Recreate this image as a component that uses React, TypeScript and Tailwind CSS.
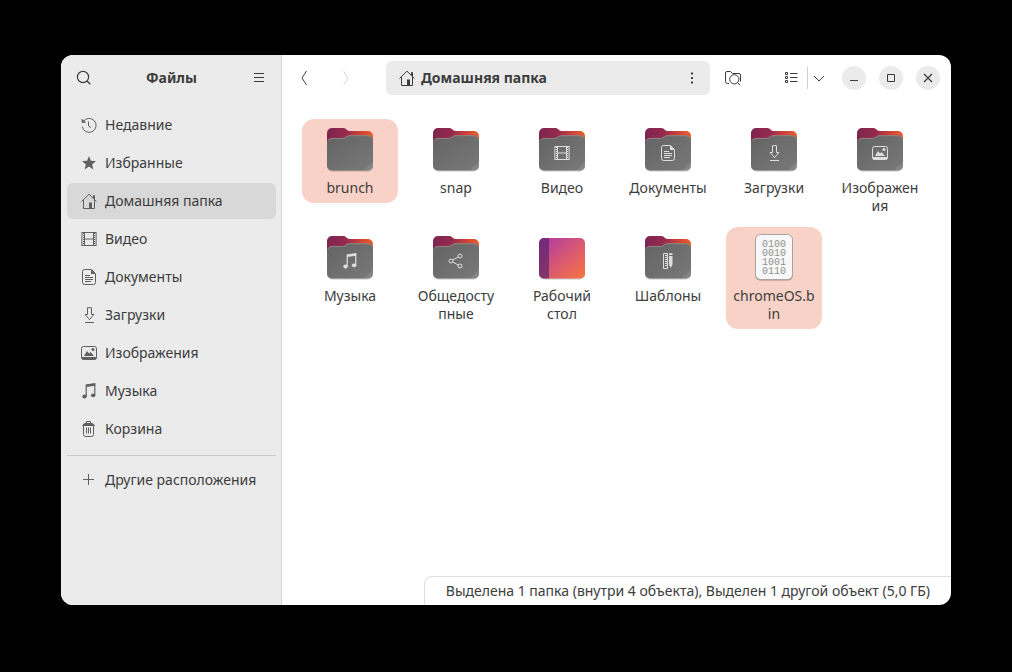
import type { ReactNode } from "react";
import clsx from "clsx";

type GlyphName =
  | "recent"
  | "star"
  | "home"
  | "video"
  | "document"
  | "download"
  | "picture"
  | "music"
  | "trash"
  | "plus"
  | "share"
  | "template";

const glyphs: Record<GlyphName, ReactNode> = {
  recent: (
    <>
      <path d="M2.2 4.6A7 7 0 1 1 1.2 9.6" />
      <path d="M.8 2.2l.4 3.6 3.6-.6z" fill="currentColor" strokeWidth=".6" />
      <path d="M7.5 4.5V9L10 10.5" />
    </>
  ),
  star: (
    <path
      d="M8 1l1.9 4.7 5.1.4-3.9 3.3 1.3 5L8 11.6l-4.4 2.8 1.3-5L1 6.1l5.1-.4z"
      fill="currentColor"
      stroke="none"
    />
  ),
  home: (
    <>
      <path d="M.5 8.6L8 1.2l7.5 7.4M12.5 5.5v-3h1v4M2.5 7v8.5H8M13.5 7v8.5H11" />
      <path d="M8 9.5h3V16H8z" fill="currentColor" stroke="none" />
    </>
  ),
  video: (
    <>
      <path d="M3.5 1.5h9v13h-9zM3.5 8h9M1 1.5h3M1 14.5h3M12 1.5h3M12 14.5h3" />
      <path d="M.9 1v14M15.1 1v14" />
      <path d="M2.5 2v12M13.5 2v12" strokeDasharray="1 1" />
    </>
  ),
  document: (
    <>
      <path d="M3.5.5h7l4 4v9a2 2 0 0 1-2 2h-9a2 2 0 0 1-2-2v-11a2 2 0 0 1 2-2z" />
      <path d="M10 .5V5h4.5z" fill="currentColor" stroke="none" />
      <path d="M4 6.5h5M4 8.5h8M4 10.5h8M4 12.5h6" />
    </>
  ),
  download: <path d="M6.5.7h4v6.8h2.4L8.5 12.6 4.1 7.500h2.4zM4 15.5h9" />,
  picture: (
    <>
      <rect x=".5" y="1.5" width="15" height="13" rx="2" />
      <path d="M.5 12h15v.8a2 2 0 0 1-2 2h-11a2 2 0 0 1-2-2z" fill="currentColor" stroke="none" />
      <path d="M3 11l3-5 2 2.5L9.5 7l3.5 4z" fill="currentColor" stroke="none" />
      <circle cx="12" cy="4.4" r="1.5" fill="currentColor" stroke="none" />
    </>
  ),
  music: (
    <>
      <path d="M5.2 13.5V2l8.6-1.2v11.4" strokeWidth="1.2" />
      <path d="M5 1.8L14.2.5v2.2L5 4z" fill="currentColor" stroke="none" />
      <ellipse cx="3.5" cy="13.5" rx="2.2" ry="1.9" fill="currentColor" stroke="none" />
      <ellipse cx="12.1" cy="12.3" rx="2.2" ry="1.9" fill="currentColor" stroke="none" />
    </>
  ),
  trash: (
    <>
      <path d="M1 4.9C2 3 3 2 4.5 2h6C12 2 13 3 14 4.9z" fill="currentColor" stroke="none" />
      <path d="M5.5 2.5v-2h4v2M2.5 4.5v9a2 2 0 0 0 2 2h6a2 2 0 0 0 2-2v-9M5.5 6.5v6M7.5 6.5v6M9.5 6.5v6" />
    </>
  ),
  plus: <path d="M7.5 2v11M2 7.5h11" />,
  share: (
    <>
      <circle cx="3" cy="8" r="2" />
      <circle cx="12" cy="3" r="2" />
      <circle cx="12" cy="13" r="2" />
      <path d="M4.8 7l5.4-3M4.800 9l5.4 3" />
    </>
  ),
  template: (
    <>
      <path d="M3.5.5h4v15h-4zM5 2.5h2M5 4.5h2M5 6.5h2M5 8.5h2M5 10.5h2M5 12.5h2" />
      <path d="M9 3h3.5v8.5L10.8 15 9 11.5zM9 .3h3.5V2H9z" fill="currentColor" stroke="none" />
    </>
  ),
};

function Glyph({ name, className }: { name: GlyphName; className?: string }) {
  return (
    <svg viewBox="0 0 16 16" fill="none" stroke="currentColor" className={clsx("h-4 w-4 shrink-0", className)} aria-hidden>
      {glyphs[name]}
    </svg>
  );
}

const places: { label: string; icon: GlyphName; active?: boolean }[] = [
  { label: "Недавние", icon: "recent" },
  { label: "Избранные", icon: "star" },
  { label: "Домашняя папка", icon: "home", active: true },
  { label: "Видео", icon: "video" },
  { label: "Документы", icon: "document" },
  { label: "Загрузки", icon: "download" },
  { label: "Изображения", icon: "picture" },
  { label: "Музыка", icon: "music" },
  { label: "Корзина", icon: "trash" },
];

type FileItem = {
  lines: string[];
  kind?: "folder" | "desktop" | "binary";
  emblem?: GlyphName;
  selected?: boolean;
};

const files: FileItem[] = [
  { lines: ["brunch"], selected: true },
  { lines: ["snap"] },
  { lines: ["Видео"], emblem: "video" },
  { lines: ["Документы"], emblem: "document" },
  { lines: ["Загрузки"], emblem: "download" },
  { lines: ["Изображен", "ия"], emblem: "picture" },
  { lines: ["Музыка"], emblem: "music" },
  { lines: ["Общедосту", "пные"], emblem: "share" },
  { lines: ["Рабочий", "стол"], kind: "desktop" },
  { lines: ["Шаблоны"], emblem: "template" },
  { lines: ["chromeOS.b", "in"], kind: "binary", selected: true },
];

// shared by all file icons, so defined once per page
function Gradients() {
  return (
    <svg className="absolute h-0 w-0" aria-hidden>
      <defs>
        <linearGradient id="folder-back" x1="0" x2="1" y1="0" y2="0">
          <stop offset="0" stopColor="#7d2452" />
          <stop offset=".42" stopColor="#962a4c" />
          <stop offset=".7" stopColor="#c9413a" />
          <stop offset="1" stopColor="#ea5f2b" />
        </linearGradient>
        <linearGradient id="folder-front" x1="0" x2="1" y1="0" y2="1">
          <stop offset="0" stopColor="#636363" />
          <stop offset="1" stopColor="#797979" />
        </linearGradient>
        <linearGradient id="desktop" x1="0" x2="1" y1="0" y2="1">
          <stop offset=".15" stopColor="#b9409a" />
          <stop offset=".55" stopColor="#d95a70" />
          <stop offset="1" stopColor="#f9743e" />
        </linearGradient>
      </defs>
    </svg>
  );
}

function FolderIcon({ emblem }: { emblem?: GlyphName }) {
  return (
    <svg viewBox="0 0 48 48" className="h-12 w-12" aria-hidden>
      <rect x="1" y="20" width="46" height="26.5" rx="5" fill="#000" opacity=".22" />
      <path d="M1 8a5 5 0 0 1 5-5h11.5c3 0 3 3 6 3H42a5 5 0 0 1 5 5v14H1z" fill="url(#folder-back)" />
      <path d="M1 18a5 5 0 0 1 5-5h10.5c3.5 0 3.500-2.7 7-2.7H42a5 5 0 0 1 5 5v25.2a5 5 0 0 1-5 5H6a5 5 0 0 1-5-5z" fill="url(#folder-front)" />
      <path d="M1.800 16a5 5 0 0 1 4.200-2.600h10.5c3.500 0 3.500-2.700 7-2.700H42a5 5 0 0 1 4.200 2.600" fill="none" stroke="#a18b88" strokeWidth=".8" />
      <path d="M38 45.5l9-9v4a5 5 0 0 1-5 5z" fill="#fff" opacity=".1" />
      {emblem && (
        <svg x="16" y="20" width="16" height="16" viewBox="0 0 16 16" fill="none" stroke="currentColor" className="text-[#dedede]">
          {glyphs[emblem]}
        </svg>
      )}
    </svg>
  );
}

function DesktopIcon() {
  return (
    <svg viewBox="0 0 48 48" className="h-12 w-12" aria-hidden>
      <rect x="1" y="6" width="46" height="40.5" rx="5" fill="#000" opacity=".22" />
      <rect x="1" y="5" width="46" height="40.5" rx="5" fill="url(#desktop)" />
      <path d="M6 5h5v40.5H6a5 5 0 0 1-5-5V10a5 5 0 0 1 5-5z" fill="#4a1e62" opacity=".6" />
    </svg>
  );
}

function BinaryIcon() {
  return (
    <svg viewBox="0 0 48 48" className="h-12 w-12" aria-hidden>
      <rect x="5" y="2" width="38" height="45.5" rx="5.5" fill="#775c54" opacity=".6" />
      <rect x="5.5" y="1.5" width="37" height="45" rx="5" fill="#f8f8f8" stroke="#aaa3a1" />
      <g fill="#8f8f8f" fontFamily="'Liberation Mono', monospace" fontSize="10" textAnchor="middle">
        <text x="24" y="14">0100</text>
        <text x="24" y="23">0010</text>
        <text x="24" y="32">1001</text>
        <text x="24" y="41">0110</text>
      </g>
    </svg>
  );
}

function FileTile({ file }: { file: FileItem }) {
  return (
    <button
      className={clsx("flex flex-col items-center gap-1.5 rounded-xl p-1.5 text-sm leading-[18px]", file.selected && "bg-[#f9d2c7]")}
    >
      {file.kind === "desktop" ? <DesktopIcon /> : file.kind === "binary" ? <BinaryIcon /> : <FolderIcon emblem={file.emblem} />}
      <span>
        {file.lines.map((line) => (
          <span key={line} className="block whitespace-nowrap">{line}</span>
        ))}
      </span>
    </button>
  );
}

function PlaceRow({ label, icon, active }: { label: string; icon: GlyphName; active?: boolean }) {
  return (
    <a
      href="#"
      className={clsx("flex h-9 items-center gap-2 whitespace-nowrap rounded-md px-3.5 text-sm", active && "bg-[#d8d8d8]")}
    >
      <Glyph name={icon} className="text-[#606060]" />
      {label}
    </a>
  );
}

function IconButton({ label, className, children }: { label: string; className: string; children: ReactNode }) {
  return (
    <button aria-label={label} className={clsx("grid shrink-0 place-items-center", className)}>
      <svg viewBox="0 0 16 16" fill="none" stroke="currentColor" className="h-4 w-4" aria-hidden>
        {children}
      </svg>
    </button>
  );
}

function Sidebar() {
  return (
    <aside className="w-[221px] shrink-0 border-r border-[#d6d6d6] bg-[#ebebeb] pr-[5px] pl-1.5">
      <header className="flex h-[46px] items-center">
        <IconButton label="Поиск" className="h-[34px] w-[34px]">
          <circle cx="7" cy="7" r="5.6" strokeWidth="1.2" />
          <path d="M11 11l3.3 3.3" strokeWidth="1.3" />
        </IconButton>
        <h1 className="flex-1 text-center text-sm font-bold">Файлы</h1>
        <IconButton label="Меню" className="h-[34px] w-[34px]">
          <path d="M3 3.5h10M3 7.5h10M3 11.5h10" />
        </IconButton>
      </header>
      <nav className="flex flex-col gap-0.5 pt-1.5">
        {places.map((place) => (
          <PlaceRow key={place.label} {...place} />
        ))}
      </nav>
      <hr className="mt-2 mb-1.5 border-[#cbcbcb]" />
      <PlaceRow label="Другие расположения" icon="plus" />
    </aside>
  );
}

function Toolbar() {
  return (
    <header className="flex h-[46px] items-center pr-[11px] pl-[5px]">
      <IconButton label="Назад" className="h-[34px] w-[34px]">
        <path d="M10.5 1L6 8l4.5 7" />
      </IconButton>
      <IconButton label="Вперёд" className="ml-2 h-[34px] w-[34px] text-[#d4d4d4]">
        <path d="M5.5 1L10 8l-4.5 7" />
      </IconButton>
      <div className="ml-[23px] flex h-[34px] flex-1 items-center gap-1.5 rounded-md bg-[#ebebeb] pl-[13px]">
        <Glyph name="home" />
        <span className="flex-1 text-sm font-bold">Домашняя папка</span>
        <IconButton label="Меню папки" className="h-[34px] w-9">
          <path d="M7 2.5h2v2H7zM7 7h2v2H7zM7 11.5h2v2H7z" fill="currentColor" stroke="none" />
        </IconButton>
      </div>
      <IconButton label="Поиск в папке" className="ml-1.5 h-[34px] w-[34px]">
        <path d="M4 13.5H2.500a2 2 0 0 1-2-2V3A1.5 1.5 0 0 1 2 1.5h3.5l2 2H14A1.5 1.5 0 0 1 15.5 5v6.500" />
        <circle cx="9.3" cy="9.3" r="4.6" />
        <path d="M12.500 12.500l2.500 2.500" />
      </IconButton>
      <IconButton label="Список" className="ml-6 h-[34px] w-[33px]">
        <path d="M2.5 2.5h2v2h-2zM2.5 6.5h2v2h-2zM2.5 10.5h2v2h-2zM7 3.5h7.5M7 7.5h7.5M7 11.5h7.5" />
      </IconButton>
      <div className="h-[22px] w-px bg-[#cfcfcf]" />
      <IconButton label="Параметры вида" className="h-[34px] w-[22px]">
        <path d="M3 6l5 5 5-5" />
      </IconButton>
      <div className="ml-3 flex gap-[13px]">
        <IconButton label="Свернуть" className="h-6 w-6 rounded-full bg-[#ebebeb]">
          <path d="M4 10.5h8" />
        </IconButton>
        <IconButton label="Развернуть" className="h-6 w-6 rounded-full bg-[#ebebeb]">
          <path d="M4.5 4.5h7v7h-7z" />
        </IconButton>
        <IconButton label="Закрыть" className="h-6 w-6 rounded-full bg-[#ebebeb]">
          <path d="M4 4l8 8M12 4l-8 8" strokeWidth="1.3" />
        </IconButton>
      </div>
    </header>
  );
}

export default function App() {
  return (
    <div className="flex min-h-screen bg-black px-[61px] pt-[55px] pb-[67px] font-['Noto_Sans','Open_Sans',sans-serif] text-[#3d3d3d]">
      <Gradients />
      <div className="flex flex-1 overflow-hidden rounded-xl bg-white">
        <Sidebar />
        <main className="flex min-w-0 flex-1 flex-col">
          <Toolbar />
          <section className="grid flex-1 grid-cols-[repeat(auto-fill,96px)] content-start items-start gap-x-2.5 gap-y-1.5 px-5 pt-[18px]">
            {files.map((file) => (
              <FileTile key={file.lines[0]} file={file} />
            ))}
          </section>
          <footer className="self-end rounded-tl-lg border-t border-l border-[#dedede] px-[21px] text-sm leading-7 whitespace-nowrap">
            Выделена 1 папка (внутри 4 объекта), Выделен 1 другой объект (5,0 ГБ)
          </footer>
        </main>
      </div>
    </div>
  );
}
